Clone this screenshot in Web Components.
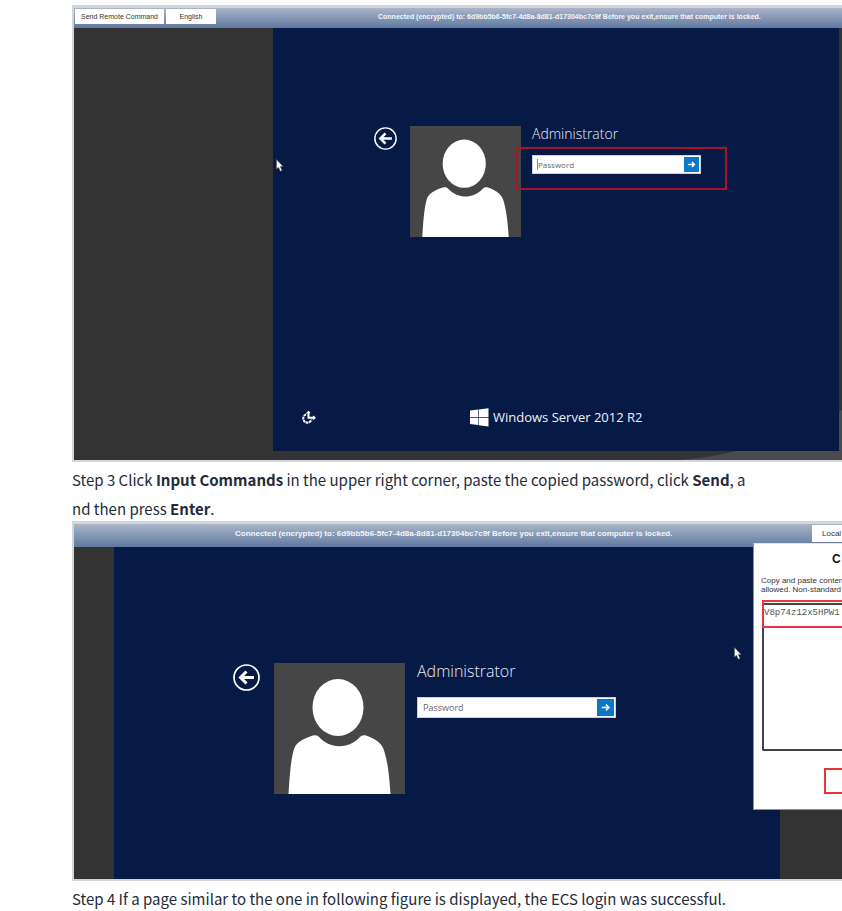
<!DOCTYPE html>
<html lang="en">
<head>
<meta charset="utf-8">
<title>ECS login guide</title>
<style>
  body { margin: 0; background: #fff; overflow-x: hidden; }
</style>
</head>
<body>
<guide-page>
  <remote-console class="first">
    <bar-button slot="start" style="--w:89px">Send Remote Command</bar-button>
    <bar-button slot="start" style="--w:50px">English</bar-button>
    <span slot="title">Connected (encrypted) to: 6d9bb5b6-5fc7-4d8a-8d81-d17304bc7c9f Before you exit,ensure that computer is locked.</span>
    <sign-in-panel marked></sign-in-panel>
    <server-brand slot="footer"></server-brand>
    <mouse-pointer slot="overlay" style="--x:202px;--y:131px"></mouse-pointer>
  </remote-console>
  <guide-step>Step 3 Click <b>Input Commands</b> in the upper right corner, paste the copied password, click <b>Send</b>, a<br>nd then press <b>Enter</b>.</guide-step>
  <remote-console class="second">
    <span slot="title">Connected (encrypted) to: 6d9bb5b6-5fc7-4d8a-8d81-d17304bc7c9f Before you exit,ensure that computer is locked.</span>
    <bar-button slot="end" style="--w:30px;--inset:10px;--align:left">Local</bar-button>
    <sign-in-panel></sign-in-panel>
    <mouse-pointer slot="overlay" style="--x:660px;--y:100px"></mouse-pointer>
    <command-dialog slot="overlay"></command-dialog>
  </remote-console>
  <guide-step>Step 4 If a page similar to the one in following figure is displayed, the ECS login was successful.</guide-step>
</guide-page>

<script>
const define = (name, html) => customElements.define(name, class extends HTMLElement {
  constructor() {
    super();
    this.attachShadow({ mode: 'open' }).innerHTML = html;
  }
});

define('guide-page', `
  <style>
    :host { display: block; padding: 5px 0 0 72px; overflow: hidden; }
    ::slotted(.first) {
      --bar: 20px; --bar-font: 7px; --title-font: 7px; --btn-h: 15px;
      --cols: 199px 1fr 3px; --bottom: 9px; --screen: 423px;
      --pad: 98px 0 0 101px; --gap: 13px; --back: 23px; --tile: 111px;
      --name: 14px; --name-h: 15px; --form-gap: 14px; --field: 169px; --field-h: 19px;
      --field-font: 8px; --swoosh: block;
    }
    ::slotted(.second) {
      --bar: 23px; --bar-font: 8px; --title-font: 8px; --btn-h: 17px;
      --cols: 40px 1fr 62px; --bottom: 0px; --screen: 332px;
      --pad: 116px 0 0 119px; --gap: 14px; --back: 27px; --tile: 131px;
      --name: 16px; --name-h: 17px; --form-gap: 17px; --field: 199px; --field-h: 21px;
      --field-font: 9px; --swoosh: none;
    }
  </style>
  <main><slot></slot></main>`);

define('guide-step', `
  <style>
    :host { display: block; font: 15px/29px "Noto Sans CJK SC", "Noto Sans", sans-serif; color: #252b3a;
      white-space: nowrap; padding-top: 3px; margin-bottom: -2px; }
    p { margin: 0; }
  </style>
  <p><slot></slot></p>`);

define('remote-console', `
  <style>
    :host { display: block; border: 3px solid #d4d5d9; border-right: 0; border-left-width: 2px; border-bottom-width: 2px;
      font-family: "Liberation Sans", Arial, sans-serif; }
    header { display: flex; align-items: flex-start; gap: 2px; height: var(--bar); padding: 1px 0 0 1px;
      box-sizing: border-box; background: linear-gradient(#a9b5c8, #7388aa 75%, #5f789f); }
    h2 { flex: 1; margin: 0; padding-left: 160px; font-size: var(--title-font); line-height: var(--btn-h);
      font-weight: bold; color: #f3f6fa; white-space: nowrap; }
    .stage { position: relative; display: grid; grid-template-columns: var(--cols);
      background: #333; padding-bottom: var(--bottom); }
    .desktop { grid-column: 2; position: relative; display: flex; flex-direction: column;
      justify-content: space-between; min-height: var(--screen); background: #071a45; }
    .swoosh { display: var(--swoosh); position: absolute; right: 0; bottom: 0; width: 162px; height: 50px; }
  </style>
  <header>
    <slot name="start"></slot>
    <h2><slot name="title"></slot></h2>
    <slot name="end"></slot>
  </header>
  <div class="stage">
    <svg class="swoosh" viewBox="0 0 162 50" aria-hidden="true"><path d="M0 50C25 48 38 45 52 42C100 30 140 15 162 0V50Z" fill="#4b4b4b"/></svg>
    <div class="desktop"><slot></slot><slot name="footer"></slot></div>
    <slot name="overlay"></slot>
  </div>`);

define('bar-button', `
  <style>
    :host { display: block; flex: none; width: var(--w); }
    button { display: block; width: 100%; height: var(--btn-h); border: 0; padding: 0 0 0 var(--inset, 0); background: #fff;
      text-align: var(--align, center); font: var(--bar-font)/var(--btn-h) "Liberation Sans", Arial, sans-serif;
      color: #333; white-space: nowrap; }
  </style>
  <button type="button"><slot></slot></button>`);

define('user-tile', `
  <style>
    :host { display: block; flex: none; width: var(--tile); }
    svg { display: block; width: 100%; }
  </style>
  <svg viewBox="0 0 131 131" role="img" aria-label="User picture">
    <path d="M0 0H131V131H0Z" fill="#464646"/>
    <ellipse cx="64" cy="44.500" rx="25.500" ry="28.500" fill="#fff"/>
    <path d="M14.500 131C16 108 17 96 20 86C22 79 31 75 39 72.500C42 72 44 72.500 46 75C57 86 74 86 85 75C87 72.500 89 72 92 72.500C99 75 107 79 109.500 86C113 96 115 108 116.500 131Z" fill="#fff"/>
  </svg>`);

define('sign-in-panel', `
  <style>
    :host { display: flex; align-items: flex-start; gap: var(--gap); padding: var(--pad);
      font-family: "Open Sans", "Noto Sans", sans-serif; }
    button { border: 0; padding: 0; background: none; }
    .back { flex: none; width: var(--back); height: var(--back); margin-top: 1px; }
    svg { display: block; width: 100%; height: 100%; }
    user-tile { margin-right: -2px; }
    form { display: grid; gap: var(--form-gap); }
    h3 { margin: 0; font-size: var(--name); line-height: var(--name-h); font-weight: 300; color: #e6ebf6; }
    .row { position: relative; width: var(--field); height: var(--field-h); display: flex; box-sizing: border-box;
      border: 1px solid #c9d2e4; background: #fff; padding: 1px; }
    input { flex: 1; min-width: 0; border: 0; padding: 0 0 0 4px; outline: 0; background: none;
      font: var(--field-font) "Open Sans", sans-serif; color: #666; }
    input::placeholder { color: #666; opacity: 1; }
    .go { flex: none; width: calc(var(--field-h) - 4px); background: #0a78c8; }
    .mark, .caret { display: none; }
    :host([marked]) .mark { display: block; position: absolute; inset: -9px -27px -17px -17px; border: 2px solid #a8122a;
      pointer-events: none; }
    :host([marked]) .caret { display: block; position: absolute; left: 4px; top: 3px; width: 1px; height: 11px; background: #888; }
  </style>
  <button class="back" type="button" aria-label="Back">
    <svg viewBox="0 0 27 27" fill="none" stroke="#fff"><circle cx="13.500" cy="13.500" r="12.500" stroke-width="1.700"/><path d="M21 13.500H8M13.500 7.500L7.500 13.500L13.500 19.500" stroke-width="3"/></svg>
  </button>
  <user-tile></user-tile>
  <form>
    <h3>Administrator</h3>
    <div class="row">
      <input type="text" placeholder="Password" aria-label="Password">
      <button class="go" type="button" aria-label="Sign in">
        <svg viewBox="0 0 18 18" fill="none" stroke="#fff" stroke-width="1.800"><path d="M5 9H12.500M9.500 6L12.500 9L9.500 12"/></svg>
      </button>
      <span class="caret"></span><span class="mark"></span>
    </div>
  </form>`);

define('server-brand', `
  <style>
    :host { display: flex; align-items: center; padding: 0 0 24px 28px; gap: 154px; color: #eef1f8;
      font: 13px/20px "Open Sans", sans-serif; white-space: nowrap; }
    button { border: 0; padding: 0; background: none; width: 15px; height: 15px; }
    svg { display: block; }
    .brand { display: flex; align-items: center; gap: 4px; }
  </style>
  <button type="button" aria-label="Ease of access">
    <svg width="15" height="15" viewBox="0 0 15 15" fill="none" stroke="#fff"><path d="M5 4.500A4.200 4.200 0 1 0 10.500 9.500" stroke-width="2" stroke-dasharray="2.600 .6"/><path d="M7.500 2V7.700H13.500" stroke-width="2"/><path d="M5.500 3.700L7.500 1.500L9 3M12 6L14 7.700L12 9.500" stroke-width="1.200"/></svg>
  </button>
  <div class="brand">
    <svg width="19" height="19" viewBox="0 0 19 19" fill="#fff" aria-hidden="true"><path d="M0 2.600L8 1.600V9H0ZM8.600 1.500L18.500 .2V9H8.600ZM0 9.700H8V17L0 16ZM8.600 9.700H18.500V18.600L8.600 17.200Z"/></svg>
    <span>Windows Server 2012 R2</span>
  </div>`);

define('mouse-pointer', `
  <style>
    :host { display: block; position: absolute; left: var(--x); top: var(--y); }
    svg { display: block; }
  </style>
  <svg width="8" height="13" viewBox="0 0 8 13" aria-hidden="true"><path d="M.5 .5V10L2.500 8.200L4.300 12.300L6 11.500L4.300 7.500H7Z" fill="#fff" stroke="#555" stroke-width=".5"/></svg>`);

define('command-dialog', `
  <style>
    :host { display: block; position: absolute; right: 0; top: -4px; width: 89px; height: 267px; box-sizing: border-box;
      overflow: hidden; background: #fff; border: 1px solid #8791a3; border-right: 0; border-top-color: #dfe4ec;
      padding: 8px 0 0 7px; white-space: nowrap; color: #333; font: 8px/9px "Liberation Sans", Arial, sans-serif; }
    h3 { margin: 0 0 10px; padding-left: 71px; font-size: 12px; line-height: 14px; color: #111; }
    p { margin: 0; }
    .box { position: relative; margin: 9px 0 0 1px; }
    textarea { display: block; box-sizing: border-box; width: 100%; height: 148px; border: 2px solid #444; border-right: 0;
      border-radius: 2px 0 0 2px; resize: none; overflow: hidden; outline: 0; padding: 2px 0 0; white-space: pre;
      font: 9px/12px "Liberation Mono", monospace; color: #555; background: #fff; }
    .mark { position: absolute; inset: -3px 0 auto; height: 28px; box-sizing: border-box; border: 2px solid #e8343a;
      border-right: 0; pointer-events: none; }
    button { display: block; margin: 17px 0 0 63px; width: 18px; height: 26px; border: 2px solid #e8343a; border-right: 0;
      background: #fff; padding: 0; }
  </style>
  <h3>C</h3>
  <p>Copy and paste conten<br>allowed. Non-standard</p>
  <div class="box"><textarea readonly aria-label="Commands">V8p74z12x5HPW1</textarea><span class="mark"></span></div>
  <button type="button" aria-label="Send"></button>`);
</script>
</body>
</html>
